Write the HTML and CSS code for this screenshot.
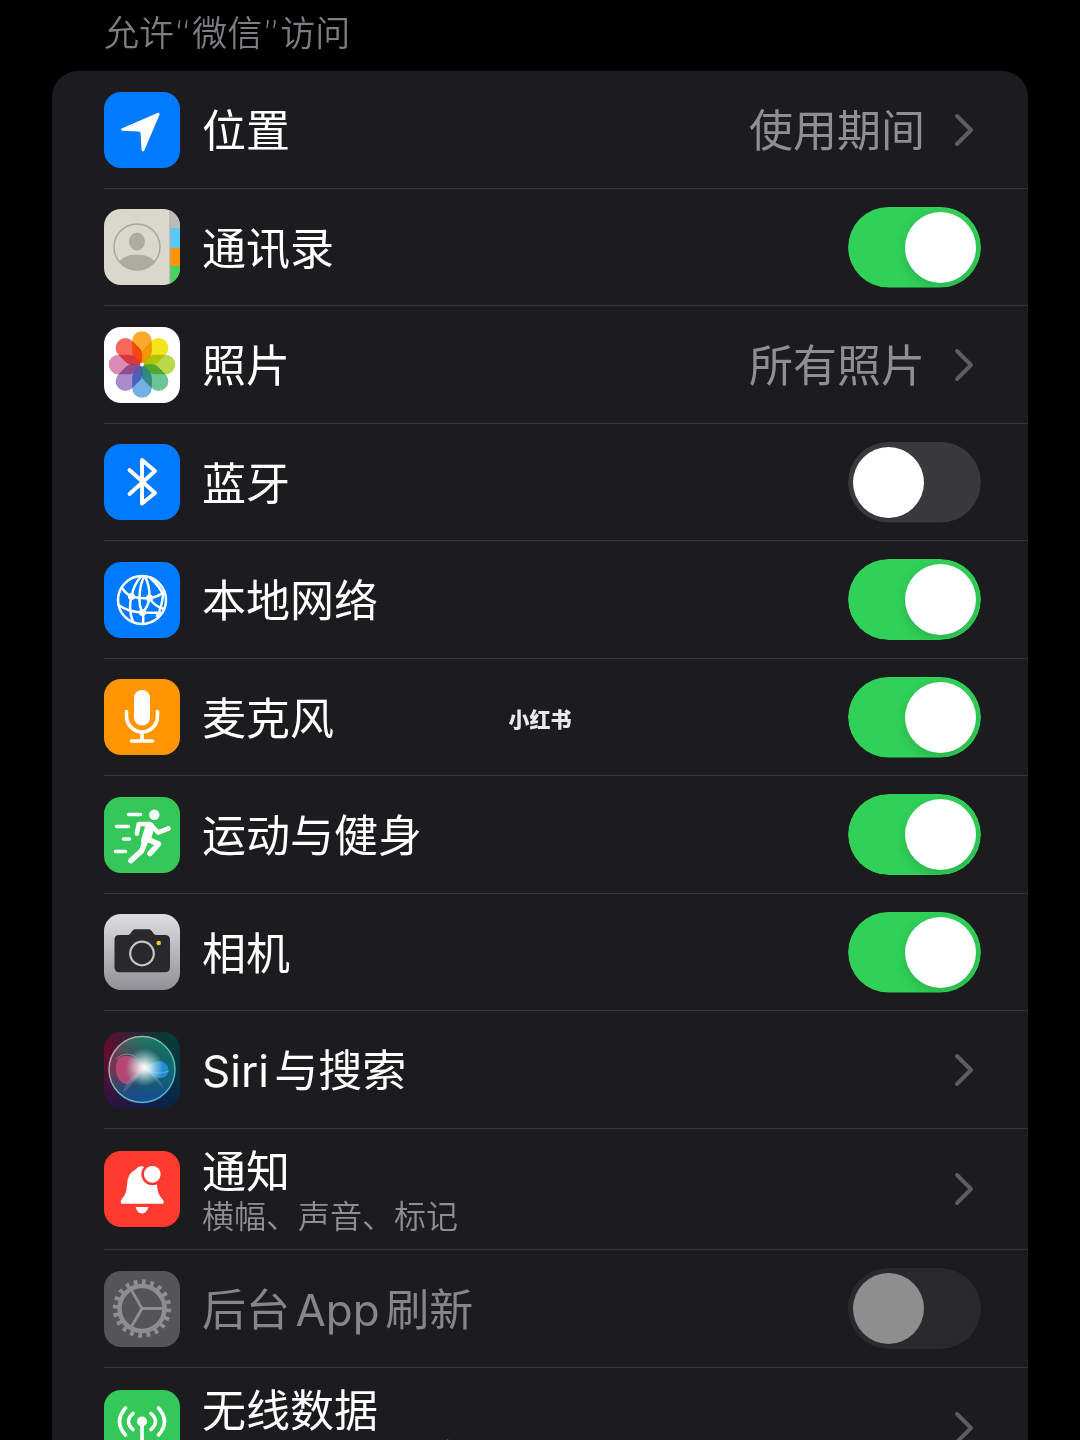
FILE: index.html
```html
<!DOCTYPE html>
<html lang="zh-CN">
<head>
<meta charset="utf-8">
<meta name="viewport" content="width=device-width, initial-scale=1">
<title>微信</title>
<link rel="stylesheet" href="styles.css">
</head>
<body>
<main class="settings">
  <h1 class="section-title">允许“微信”访问</h1>
  <ul class="card">
    <li class="row">
      <a class="row-body" href="#location">
        <svg class="icon icon-blue" viewBox="0 0 76 76" aria-hidden="true"><path d="M18.200 36.200 53.500 21Q56.300 20.300 55.400 23.100L40.300 58.500Q38.900 60.600 37.600 58.300L36.600 41.500Q36.400 39.500 34.400 39.400L18.300 38.700Q15.500 37.900 18.200 36.200Z" fill="#fff"/></svg>
        <span class="label">位置</span>
        <span class="value">使用期间</span>
        <svg class="chevron" viewBox="0 0 20 34" aria-hidden="true"><path d="M3 3 17 17 3 31"/></svg>
      </a>
    </li>
    <li class="row">
      <div class="row-body">
        <svg class="icon icon-contacts" viewBox="0 0 76 76" aria-hidden="true">
          <defs><clipPath id="face"><circle cx="33" cy="38" r="23"/></clipPath></defs>
          <path d="M66 0h10v19H66z" fill="#bdbbb6"/><path d="M66 19h10v20H66z" fill="#5ac8fa"/><path d="M66 39h10v18H66z" fill="#ff9500"/><path d="M66 57h10v19H66z" fill="#45d35c"/>
          <path d="M66 0v76" stroke="#a9a79d" stroke-width="1"/>
          <g clip-path="url(#face)" fill="#aeaba1"><ellipse cx="33" cy="32.500" rx="8" ry="9"/><ellipse cx="33" cy="57" rx="19" ry="11.500"/></g>
          <circle cx="33" cy="38" r="23" fill="none" stroke="#a9a69c" stroke-width="1.500"/>
        </svg>
        <label class="label" for="contacts">通讯录</label>
        <input class="switch" type="checkbox" role="switch" id="contacts" checked>
      </div>
    </li>
    <li class="row">
      <a class="row-body" href="#photos">
        <svg class="icon icon-white" viewBox="0 0 76 76" aria-hidden="true">
          <defs><path id="petal" d="M28.200 14a9.800 9.800 0 0 1 19.600 0V25Q47.800 28 45.500 30.300L38 37.500 30.500 30.300Q28.200 28 28.200 25Z"/></defs>
          <g class="petals">
            <use href="#petal" fill="#fba92c"/>
            <use href="#petal" fill="#f3e51c" transform="rotate(45 38 37.500)"/>
            <use href="#petal" fill="#b9d94a" transform="rotate(90 38 37.500)"/>
            <use href="#petal" fill="#6cc596" transform="rotate(135 38 37.500)"/>
            <use href="#petal" fill="#73b0e4" transform="rotate(180 38 37.500)"/>
            <use href="#petal" fill="#a78bcb" transform="rotate(225 38 37.500)"/>
            <use href="#petal" fill="#dc8ab6" transform="rotate(270 38 37.500)"/>
            <use href="#petal" fill="#f8695c" transform="rotate(315 38 37.500)"/>
          </g>
          <circle cx="38" cy="37.500" r="2" fill="#fff"/>
        </svg>
        <span class="label">照片</span>
        <span class="value">所有照片</span>
        <svg class="chevron" viewBox="0 0 20 34" aria-hidden="true"><path d="M3 3 17 17 3 31"/></svg>
      </a>
    </li>
    <li class="row">
      <div class="row-body">
        <svg class="icon icon-blue" viewBox="0 0 76 76" aria-hidden="true"><path d="M25.500 26 51 49 38 59.500V16L51 27 25.500 50" fill="none" stroke="#fff" stroke-width="3.900" stroke-linecap="round" stroke-linejoin="round"/></svg>
        <label class="label" for="bluetooth">蓝牙</label>
        <input class="switch" type="checkbox" role="switch" id="bluetooth">
      </div>
    </li>
    <li class="row">
      <div class="row-body">
        <svg class="icon icon-blue" viewBox="0 0 76 76" aria-hidden="true">
          <g fill="none" stroke="#fff" stroke-width="2.500" stroke-linecap="round">
            <circle cx="38" cy="38" r="24"/>
            <path d="M37 14.500Q30 22 27.500 34.500 24 47 29 60"/>
            <path d="M41 14.500Q46 24 45.500 36 44 45 38.500 50.500"/>
            <path d="M46 15.500Q57 26 59 33 58 45 53 54"/>
            <path d="M40 15Q36 22 35.500 35 35 44 38.500 50.500 40 56 39 62"/>
            <path d="M18 26Q22 32 27.500 34.500 37 37 45.500 36 54 35 60 30"/>
            <path d="M14.500 43Q24 50 38.500 50.500 49 50.500 57 51"/>
            <path d="M45.500 36Q50 44 60 47"/>
          </g>
          <g fill="#fff"><circle cx="27.500" cy="34.500" r="3.500"/><circle cx="45.500" cy="36" r="3.600"/><circle cx="38.500" cy="50.500" r="3.600"/></g>
        </svg>
        <label class="label" for="network">本地网络</label>
        <input class="switch" type="checkbox" role="switch" id="network" checked>
      </div>
    </li>
    <li class="row">
      <div class="row-body">
        <svg class="icon icon-orange" viewBox="0 0 76 76" aria-hidden="true"><rect x="30" y="11" width="16" height="35.500" rx="8" fill="#fff"/><path d="M22.500 32.500V37a15.500 16 0 0 0 31 0v-4.500M38 53v8.500M27.500 62h21" fill="none" stroke="#fff" stroke-width="3.600" stroke-linecap="round"/></svg>
        <label class="label" for="microphone">麦克风</label>
        <input class="switch" type="checkbox" role="switch" id="microphone" checked>
      </div>
    </li>
    <li class="row">
      <div class="row-body">
        <svg class="icon icon-green" viewBox="0 0 76 76" aria-hidden="true">
          <circle cx="50.300" cy="17.800" r="5.200" fill="#fff"/>
          <path d="M39 25 49 26 50 32 46.500 44 38 49 37 43 41 30Z" fill="#fff"/>
          <g fill="none" stroke="#fff" stroke-linecap="round" stroke-linejoin="round">
            <path d="M32.800 36.500 34.800 27H46L54 35.500 64.500 31.500" stroke-width="4.600"/>
            <path d="M43 42 54.500 47 46 56.500M42 43 37.500 54 27 63.500" stroke-width="5.600"/>
            <path d="M24.500 17.500h12M12.500 29.500h12M19.500 42h6M11.500 54.500h10" stroke-width="3.600"/>
          </g>
        </svg>
        <label class="label" for="fitness">运动与健身</label>
        <input class="switch" type="checkbox" role="switch" id="fitness" checked>
      </div>
    </li>
    <li class="row">
      <div class="row-body">
        <svg class="icon icon-camera" viewBox="0 0 76 76" aria-hidden="true"><path d="M15 21h9c3 0 4-5.700 7-5.700h14c3 0 4 5.700 7 5.700h9q5 0 5 5v27.300q0 5-5 5H15.500q-5 0-5-5V26q0-5 4.500-5Z" fill="#29292b"/><circle cx="38" cy="39.500" r="11.800" fill="none" stroke="#c5c5c8" stroke-width="2.200"/><circle cx="54.700" cy="29" r="2.300" fill="#e8cc2e"/></svg>
        <label class="label" for="camera">相机</label>
        <input class="switch" type="checkbox" role="switch" id="camera" checked>
      </div>
    </li>
    <li class="row">
      <a class="row-body" href="#siri">
        <svg class="icon icon-siri" viewBox="0 0 76 76" aria-hidden="true">
          <defs>
            <radialGradient id="glow"><stop offset="0" stop-color="#fff"/><stop offset=".25" stop-color="#fff" stop-opacity=".8"/><stop offset="1" stop-color="#b8fff0" stop-opacity="0"/></radialGradient>
            <linearGradient id="orb" x1="0" y1=".4" x2="1" y2=".6"><stop offset="0" stop-color="#9a2750"/><stop offset=".5" stop-color="#275e65"/><stop offset="1" stop-color="#08737c"/></linearGradient>
            <linearGradient id="rim" x1="0" y1="0" x2="1" y2="1"><stop offset="0" stop-color="#e59aa7"/><stop offset=".5" stop-color="#5cc6a0"/><stop offset="1" stop-color="#5da4d6"/></linearGradient>
            <linearGradient id="depth" x1="0" y1="0" x2="0" y2="1"><stop offset="0" stop-color="#12945e" stop-opacity=".6"/><stop offset=".45" stop-color="#164a58" stop-opacity=".1"/><stop offset="1" stop-color="#1248a4" stop-opacity=".9"/></linearGradient>
          </defs>
          <circle cx="38" cy="37.500" r="33" fill="url(#orb)"/><circle cx="38" cy="37.500" r="33" fill="url(#depth)" stroke="url(#rim)" stroke-width="1.500"/>
          <path d="M40 36C32 24 23 21 15 26 9 34 12 50 22 52 31 52 34 41 40 36Z" fill="#e8497f" opacity=".65"/>
          <path d="M41 37C48 28 60 26 64 35 67 47 53 51 41 37Z" fill="#2b9af0" opacity=".75"/>
          <path d="M40 37Q23 43 19 61 32 50 40 37M41 37Q50 47 60 57 53 40 41 37" fill="#7eb9df" opacity=".25"/>
          <path d="M12 27Q27 14 40 35 52 45 65 39" fill="none" stroke="#c7f5e7" opacity=".35"/>
          <circle cx="40.500" cy="35.500" r="19" fill="url(#glow)"/>
        </svg>
        <span class="label">Siri与搜索</span>
        <svg class="chevron" viewBox="0 0 20 34" aria-hidden="true"><path d="M3 3 17 17 3 31"/></svg>
      </a>
    </li>
    <li class="row row-detailed">
      <a class="row-body" href="#notifications">
        <svg class="icon icon-red" viewBox="0 0 76 76" aria-hidden="true"><path d="M17.500 52.700Q15.500 50 18.500 47 22.500 43 23 34 23.500 23 30 19.500 32 18.500 33 17 35.500 14.500 39 15.400L49 22 53 34Q53.500 43 57.500 47 61 50.500 59 52.700Z" fill="#fff"/><path d="M31.500 56h13Q42.500 62.500 38 62.500T31.500 56Z" fill="#fff"/><circle cx="48.300" cy="23.300" r="9.700" fill="#fff" stroke="#ff3b30" stroke-width="2.600"/></svg>
        <span class="label">通知<small class="detail">横幅、声音、标记</small></span>
        <svg class="chevron" viewBox="0 0 20 34" aria-hidden="true"><path d="M3 3 17 17 3 31"/></svg>
      </a>
    </li>
    <li class="row">
      <div class="row-body is-disabled">
        <svg class="icon icon-gray" viewBox="0 0 76 76" aria-hidden="true">
          <g fill="none" stroke="#8e8e90"><circle cx="38" cy="37.500" r="22.500" stroke-width="4.500"/><circle cx="38" cy="37.500" r="26.500" stroke-width="5.500" pathLength="40" stroke-dasharray="0.900 1.100"/><path d="M38 37.500H60M38 37.500 27 18.500M38 37.500 27 56.500" stroke-width="2.800"/></g>
        </svg>
        <label class="label" for="refresh">后台App刷新</label>
        <input class="switch" type="checkbox" role="switch" id="refresh" disabled>
      </div>
    </li>
    <li class="row row-detailed">
      <a class="row-body" href="#data">
        <svg class="icon icon-green" viewBox="0 0 76 76" aria-hidden="true"><circle cx="38" cy="31.500" r="5" fill="#fff"/><path d="M38 32v31M29 23.500q-9 8 0 16M47 23.500q9 8 0 16M21.500 18q-12 13.500 0 27M54.500 18q12 13.500 0 27" fill="none" stroke="#fff" stroke-width="3.600" stroke-linecap="round"/></svg>
        <span class="label">无线数据<small class="detail">WLAN与蜂窝网络</small></span>
        <svg class="chevron" viewBox="0 0 20 34" aria-hidden="true"><path d="M3 3 17 17 3 31"/></svg>
      </a>
    </li>
  </ul>
</main>
<div class="watermark">小红书</div>
</body>
</html>
```
FILE: styles.css
```css
* { box-sizing: border-box; }

body {
  margin: 0;
  height: 100vh;
  overflow: hidden;
  background: #000;
  color: #fff;
  font-family: Inter, "Noto Sans CJK SC", sans-serif;
  text-autospace: normal;
}

.settings { padding: 8px 52px 0; }

.section-title {
  margin: 0;
  padding: 0 52px 11px;
  color: #7d7d82;
  font-family: "DejaVu Sans", "Noto Sans CJK SC", sans-serif;
  font-size: 35px;
  font-weight: 350;
  line-height: 52px;
}

.card {
  margin: 0;
  padding: 0 0 0 52px;
  list-style: none;
  background: #1c1c1e;
  border-radius: 26px;
}

.row { height: 117px; }
.row:nth-child(2n + 3) { height: 118px; }
.row.row-detailed { height: 121px; }
.row + .row { border-top: 1px solid #38383b; }

.row-body {
  display: flex;
  align-items: center;
  height: 100%;
  padding-right: 47px;
  color: inherit;
  text-decoration: none;
}

.icon {
  flex: none;
  width: 76px;
  height: 76px;
  margin-right: 22px;
  border-radius: 17px;
}
.icon-blue { background: #007aff; }
.icon-white { background: #fff; }
.icon-orange { background: #ff9500; }
.icon-green { background: #34c759; }
.icon-red { background: #ff3b30; }
.icon-gray { background: #555558; }
.icon-contacts { background: #dad7cc; }
.icon-camera { background: linear-gradient(#dedee2, #909096); }
.icon-siri {
  background:
    radial-gradient(circle at 100% 0, #073f36, transparent 70%),
    radial-gradient(circle at 0 20%, #6b0c2d, transparent 75%),
    linear-gradient(90deg, #1c1449, #08264b);
}
.petals use { mix-blend-mode: multiply; }

.label,
.value {
  padding-top: 3px;
  font-size: 44px;
  font-weight: 380;
  line-height: 52px;
}
.label { flex: 1; }
.value {
  margin-right: 29px;
  color: #8e8e93;
}
.detail {
  display: block;
  color: #8e8e93;
  font-size: 32px;
  font-weight: 350;
  line-height: 38px;
}
.is-disabled .label { color: #868688; }

.chevron {
  flex: none;
  width: 20px;
  height: 34px;
  margin-right: 7px;
  fill: none;
  stroke: #5d5d61;
  stroke-width: 4;
  stroke-linecap: round;
  stroke-linejoin: round;
}

.switch {
  flex: none;
  appearance: none;
  display: flex;
  width: 133px;
  height: 81px;
  margin: 0;
  padding: 5px;
  border-radius: 41px;
  background: #39393c;
  clip-path: inset(0 round 41px);
}
.switch::before {
  content: "";
  width: 71px;
  height: 71px;
  border-radius: 50%;
  background: #fff;
}
.switch:checked {
  justify-content: flex-end;
  background: #30d158;
}
.switch:checked::before { box-shadow: 0 4px 12px rgb(0 0 0 / 15%); }
.switch:disabled { background: #2a2a2d; }
.switch:disabled::before { background: #8e8e8e; }

.watermark {
  position: fixed;
  top: 50%;
  left: 50%;
  transform: translate(-50%, -50%);
  color: #e9e9ec;
  font-size: 21px;
  font-weight: 900;
  line-height: 24px;
  white-space: nowrap;
}
```
